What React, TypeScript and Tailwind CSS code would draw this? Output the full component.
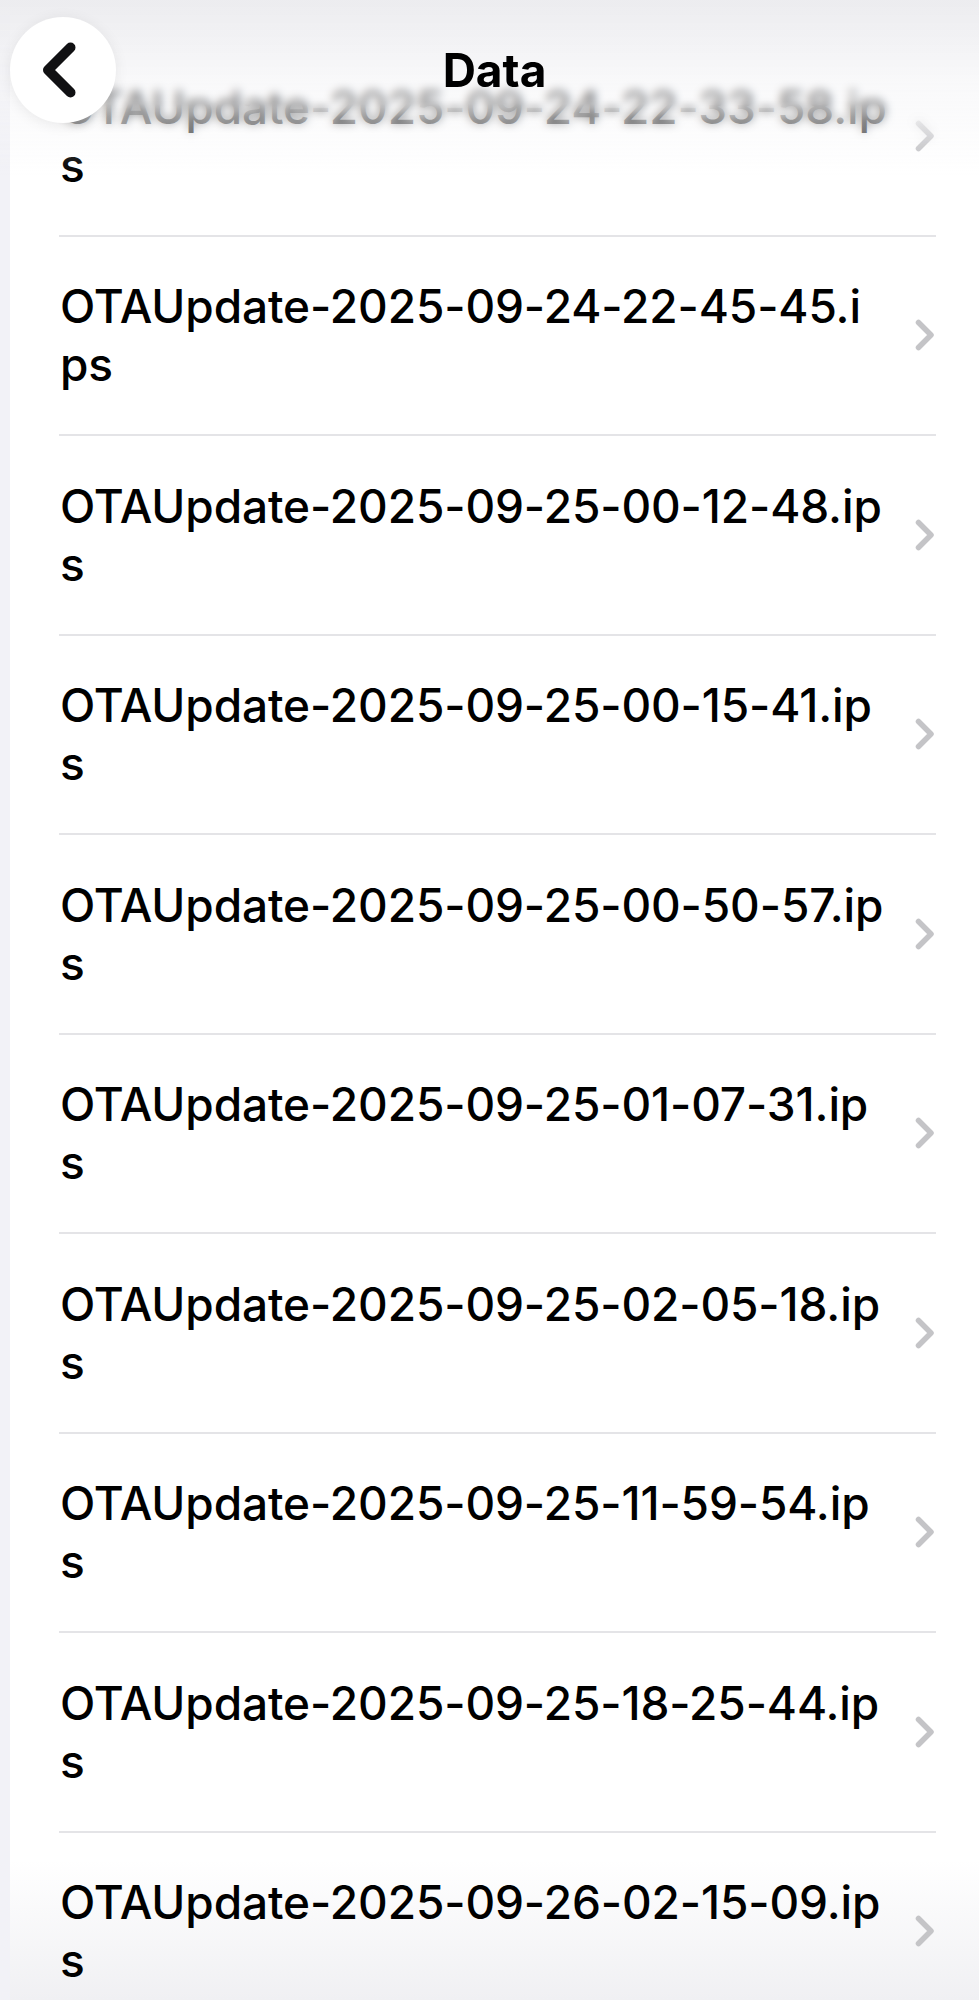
const files: string[] = [
  "OTAUpdate-2025-09-24-22-33-58.ips",
  "OTAUpdate-2025-09-24-22-45-45.ips",
  "OTAUpdate-2025-09-25-00-12-48.ips",
  "OTAUpdate-2025-09-25-00-15-41.ips",
  "OTAUpdate-2025-09-25-00-50-57.ips",
  "OTAUpdate-2025-09-25-01-07-31.ips",
  "OTAUpdate-2025-09-25-02-05-18.ips",
  "OTAUpdate-2025-09-25-11-59-54.ips",
  "OTAUpdate-2025-09-25-18-25-44.ips",
  "OTAUpdate-2025-09-26-02-15-09.ips",
];

// iOS wraps these by character; the second name breaks one letter earlier
const wrapAt = (name: string, i: number) => (i === 1 ? name.length - 2 : name.length - 1);

function Chevron() {
  return (
    <svg width="22" height="34" viewBox="0 0 22 34" fill="none" className="shrink-0">
      <path d="M4.5 4.5 L17 17 L4.5 29.5" stroke="#c4c4c7" strokeWidth="5.5" strokeLinecap="round" strokeLinejoin="round" />
    </svg>
  );
}

function FileRow({ name, index }: { name: string; index: number }) {
  const cut = wrapAt(name, index);
  return (
    <div>
      <div className="flex h-[197.5px] items-center pl-[50px] pr-[43px]">
        <div className="flex-1 text-[46px] font-medium leading-[58px] tracking-[-0.1px] text-black">
          <div className="whitespace-nowrap">{name.slice(0, cut)}</div>
          <div className="whitespace-nowrap">{name.slice(cut)}</div>
        </div>
        <Chevron />
      </div>
      <div className="ml-[49px] mr-[43px] h-[2px] bg-[#e4e4e7]" />
    </div>
  );
}

export default function App() {
  return (
    <div className="relative h-[2000px] w-[979px] overflow-hidden bg-[#f2f2f7] font-['Inter','Noto_Sans',sans-serif]">
      {/* list */}
      <div className="ml-[10px] h-full bg-linear-to-b from-white from-[93%] to-[#f0f0f3] pt-[37px]">
        {files.map((f, i) => (
          <FileRow key={f} name={f} index={i} />
        ))}
      </div>

      {/* nav bar blur + tint, lying over the scrolled list */}
      <div className="pointer-events-none absolute left-[10px] right-0 top-0 h-[148px] backdrop-blur-[5px] [mask-image:linear-gradient(to_bottom,black_70%,transparent)]" />
      <div className="pointer-events-none absolute inset-x-0 top-0 h-[175px] bg-linear-to-b from-[#ececef] via-[#f5f5f7]/65 via-[45%] to-white/0" />

      <header className="absolute inset-x-0 top-0 grid grid-cols-[106px_1fr_106px] items-center pl-[10px] pt-[17px]">
        <button className="flex h-[106px] w-[106px] items-center justify-center rounded-full bg-white shadow-[0_2px_14px_rgba(0,0,0,0.08)]">
          <svg width="34" height="56" viewBox="0 0 34 56" fill="none" className="mr-[8px]">
            <path d="M28.5 5.5 L6 28 L28.5 50.5" stroke="#111113" strokeWidth="10" strokeLinecap="round" strokeLinejoin="round" />
          </svg>
        </button>
        <h1 className="text-center text-[46px] font-bold leading-[60px] text-black">Data</h1>
        <div />
      </header>
    </div>
  );
}
